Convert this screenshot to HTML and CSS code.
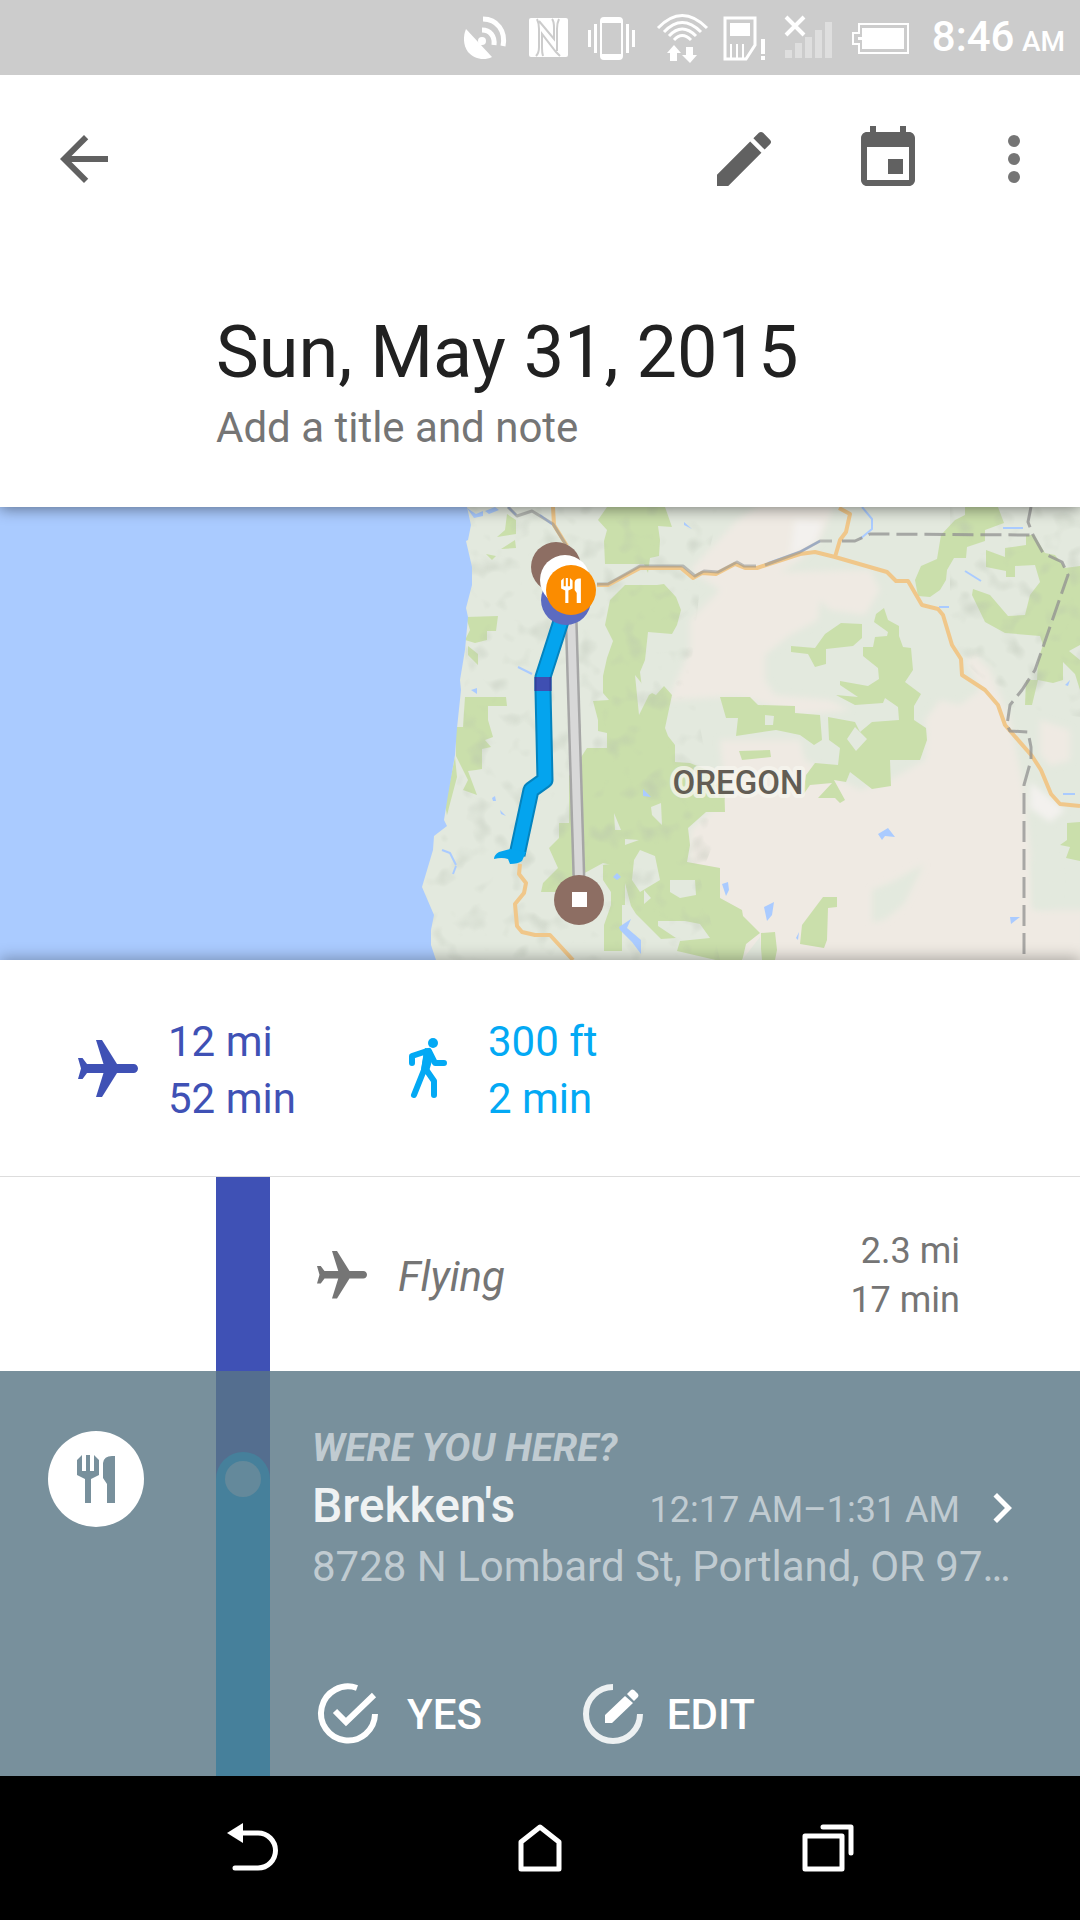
FILE: index.html
```html
<!DOCTYPE html>
<html lang="en">
<head>
    <meta charset="UTF-8">
    <meta name="viewport" content="width=device-width, initial-scale=1.0">
    <title>Timeline - Sun, May 31, 2015</title>
    <link rel="stylesheet" href="styles.css">
</head>
<body>

<!-- shared icons -->
<svg class="sprite" aria-hidden="true">
    <symbol id="plane" viewBox="0 0 24 24">
        <path transform="rotate(90 12 12)" d="M21 16v-2l-8-5V3.5c0-.83-.67-1.5-1.5-1.5S10 2.67 10 3.5V9l-8 5v2l8-2.5V19l-2 1.5V22l3.5-1 3.5 1v-1.5L13 19v-5.5l8 2.5z"/>
    </symbol>
    <symbol id="food" viewBox="0 0 38 48">
        <path d="M0 5L5 0v16h4V0h4v16h4V0l5 5v15l-8 4v24H8V24l-8-4z"/>
        <path d="M26 8q1-7 9-7h3v47h-8V29l-4-6z"/>
    </symbol>
</svg>

<div class="status-bar">
    <svg width="46" height="50" viewBox="464 12 46 50">
        <path d="M466 28l26 28c-8 4-18 2-24-5-5-7-5-16-2-23z"/>
        <circle cx="482" cy="40" r="4"/>
        <path d="M478 46l6-8" class="line"/>
        <path d="M482 29c8 0 13 6 12 15M483 18c14 0 23 12 20 27" class="line thick"/>
    </svg>
    <svg width="42" height="50" viewBox="528 12 42 50">
        <rect x="529" y="17" width="39" height="39" rx="2"/>
        <path d="M537 18q2 4 2 10v18q0 6-3 9M539 20l15 18V27q0-7-2-9M543 55q-1-3-1-8V33l14 18 4 4M559 18q-2 4-2 10v22" class="cut"/>
    </svg>
    <svg width="50" height="50" viewBox="588 12 50 50">
        <path fill-rule="evenodd" d="M604 16h15q4 0 4 4v35q0 4-4 4h-15q-4 0-4-4V20q0-4 4-4zM602 22v31h19V22z"/>
        <path d="M588 29h3v17h-3zM594 23h3v29h-3zM626 23h3v29h-3zM632 29h3v17h-3z"/>
    </svg>
    <svg width="50" height="50" viewBox="656 12 50 50">
        <path d="M658 27Q682 2 707 27M664 31Q682 12 701 31M669 35Q682 21 696 35M674 39Q682 30 691 39" class="line"/>
        <path d="M667 52l7-8 7 8h-4v8h-7v-8zM682 54l8 8 7-8h-4v-8h-7v8z"/>
    </svg>
    <svg width="42" height="50" viewBox="724 12 42 50">
        <path d="M725 17h30v27l-9 14h-21z" class="line"/>
        <path d="M730 22h20v13h-20zM730 43h2v14h-2zM736 43h2v14h-2zM742 43h2v14h-2zM761 38h4v15h-4zM761 55h4v4h-4z"/>
    </svg>
    <svg width="50" height="50" viewBox="784 12 50 50">
        <path d="M785 49h7v8h-7zM795 42h7v15h-7zM805 36h7v21h-7zM815 29h7v28h-7zM825 21h7v36h-7z" opacity=".35"/>
        <path d="M786 16l18 18M804 16l-18 18" class="line bold"/>
    </svg>
    <svg width="58" height="50" viewBox="852 12 58 50">
        <path d="M859 23h49v29h-49v-9h-6V32h6z" class="line thin"/>
        <path d="M862 27h42v21h-42v-9h-4v-3h4z"/>
    </svg>
    <div class="clock">8:46 <small>AM</small></div>
</div>

<header class="header">
    <div class="toolbar">
        <button class="icon-btn" aria-label="Back">
            <svg viewBox="0 0 24 24"><path d="M20 11H7.83l5.59-5.59L12 4l-8 8 8 8 1.41-1.41L7.83 13H20v-2z"/></svg>
        </button>
        <div class="actions">
            <button class="icon-btn" aria-label="Edit day">
                <svg viewBox="0 0 24 24"><path d="M3 17.25V21h3.75L17.81 9.94l-3.75-3.75L3 17.25zM20.71 7.04c.39-.39.39-1.02 0-1.41l-2.34-2.34c-.39-.39-1.02-.39-1.41 0l-1.83 1.83 3.75 3.75 1.83-1.83z"/></svg>
            </button>
            <button class="icon-btn" aria-label="Pick a date">
                <svg viewBox="0 0 24 24"><path d="M17 12h-5v5h5v-5zM16 1v2H8V1H6v2H5c-1.11 0-1.99.9-1.99 2L3 19c0 1.1.89 2 2 2h14c1.1 0 2-.9 2-2V5c0-1.1-.9-2-2-2h-1V1h-2zm3 18H5V8h14v11z"/></svg>
            </button>
            <button class="icon-btn more" aria-label="More options">
                <svg viewBox="0 0 24 24"><circle cx="12" cy="6" r="2"/><circle cx="12" cy="12" r="2"/><circle cx="12" cy="18" r="2"/></svg>
            </button>
        </div>
    </div>
    <div class="day">
        <h1>Sun, May 31, 2015</h1>
        <p>Add a title and note</p>
    </div>
</header>

<svg class="map" viewBox="0 507 1080 453" preserveAspectRatio="xMidYMid slice" role="img" aria-label="Map of Oregon">
    <defs>
        <filter id="soft"><feGaussianBlur stdDeviation="3"/></filter>
        <filter id="relief" x="0" y="0" width="100%" height="100%">
            <feTurbulence type="fractalNoise" baseFrequency=".045" numOctaves="2" seed="8"/>
            <feColorMatrix values="0 0 0 0 .45  0 0 0 0 .5  0 0 0 0 .42  1.2 0 0 0 -.66"/>
            <feComposite in2="SourceGraphic" operator="in"/>
        </filter>
    </defs>
    <rect class="land" x="400" y="507" width="680" height="453"/>

    <!-- dry plains -->
    <g class="desert" filter="url(#soft)">
        <path d="M738 520l22-16h75l-15 36-20 20-20 12 90-2 10 20-15 25-35-5-10-10-2 20-28 15-25 20v25l10 15 55 5 20 10-50 5-60-18h-20l-52 3 22-50v-30l30-30-30-20z"/>
        <path d="M720 740h80l5 20 55 30 30-10 35-20 2-27-2-13 15-20 20 5 20-15-15-30 10-5 15 15 20 50 5 25 9 45 6 60 5 60h50v60H745l-3-45-22-25-20-20-10-15v-35l15-13 20-22z"/>
        <path d="M1040 720l30 10v30l-20 6-10-12z"/>
        <path d="M795 520l28 2-8 22-25 12z" class="pale"/>
        <path d="M1030 782l35 28-15 12-20-14z" class="pale"/>
    </g>
    <g class="land" filter="url(#soft)">
        <path d="M872 890l20-8 32-18-20 40-20 16-12 2zM1032 860l20-5 6 20-2 30-24 4z"/>
    </g>

    <!-- forests -->
    <g class="forest">
        <path d="M466 617l32-1-2 15h-9v9l-12 3-10-3 5-10zM468 646l10 8v11l-10-10zM465 697h41l1 9h-19v14l5 17-8 3 6 7-9 2v20l-6 1-8 1 9 24-14-5 5-10-12-24v-29h7zM507 514l9 6v14l-19 3 8-7zM515 540l1 8-15 1zM486 554l10 2-4 4zM455 757l2 20-10 38-2-10z"/>
        <path d="M607 507h58l7 20-14-1 2 14-1 16-9 2-2 15-4-9-39 0-1-23 3-11-9-10z"/>
        <path d="M610 600l15-15h32l7-1 12 13 5 13-4 15-5 9-24-2-3 28-5 12 2 16 14 7 8-9 8 9-7 33 3 8 7 9v17l15 1 34 14 1 35h-19l-18 16 2 17-3 17 33 6v30l22 12 1 6 17 17-14 11-4 17h-22l-30-7-13-3 3-10 30-3-10-14-15-3h-27v5l18 12-15 1-25-25-5-8-6-23 0-15-22-5-22 12-18 17h-22l2-9 15-15-9-20 10-10v-15h10v-47l18-28h20v-15l-9-2v-11l-5-19 16-1-6-7v-17l4-18 6-17-8-16z"/>
        <path d="M603 865l22-3v43l-3 0v46h-18v-26l7-20v-13l-8-12z"/>
        <path d="M965 507h33l6 16-19 7v11l-18 6-1 11h-12l-7 12-1 10-6 10-10 7-12-1-3-16 6-14 16-7 4-24 14-15 10-5z"/>
        <path d="M986 550l19 7v-9l21-3v-10h8l11 18 10 2 10 13 15-2v79l-11 6 11 9v30l-5-16-12-12v18l-10 3-15-3-6 25h-7l1-25h11l1-20 5-15-3-9-35-3-20-11-13-27 1-6 17 6 18 21 17-1 5-20 10-13-5-17-20 1v11h-9v-6l-20-4z"/>
        <path d="M791 646l24 2 10-14 16-11 21 1v14l-9 8-27 3v15l-11 3-7-13-17-2z"/>
        <path d="M884 608l4 12 11 6v10l4 11 8 1 2 22-8 12 16 12-7 12v14l12 8 1 12-7 20h-30l1 26-19 3-22-17-4 10-12-2 11 20-5 3-5-5h-17l14-15-22 2-7 10 3-20 9-12 23 2 2-17-11-8-1-23 27 5 5 10 12-10 27-2-1-13-13-9-2 5-28 2-19-10 22 2-18-12v-4l28 5 11-7-1-11-15-12v-9h10l2-10 12-1 1-4-14-10 2-8z"/>
        <path d="M720 697h30l8 8 37 1v7l25 2 2 25-8 5-14-10-24-5-40 6 2-18h-12zM739 751l31-1 1 7-29 3zM823 897h14v10l-9 1-1 32-3 8-24-4 2-19zM1067 823l13-1v39l-14-3 4-11-10-2 7-5zM761 933l14-1 2 18-2 10h-14zM700 797h25l-5 14z"/>
    </g>
    <g class="land">
        <path d="M765 715l9 1-1 9h-8zM634 860l6-10 15 6 5 24-20 12-8-12zM670 880h25l1 15-16 3-10-6zM644 890l7 8-7 6zM651 807l10-4 1 22-10-10zM614 813l7 17-6 0zM625 839l14 1-14 5zM760 937l-18 23h20zM855 727l12 12-11 12-9-12z"/>
        <path d="M639 715l-4-40 12 15 10 0-8 5z"/>
    </g>
    <path class="relief" filter="url(#relief)" d="M470 507h250l-20 80-10 90 30 150-20 50 20 83H436l-14-73 40-120z"/>
    <path class="relief" filter="url(#relief)" d="M950 507h130v210l-70-10-60-60z"/>

    <!-- water -->
    <path class="water" d="M0 507h467l4 18-3 15-2 1 6 26v18l-6 23 2 9-3 33-5 30 1 10-4 38-2 27-7 40-4 25 3 6-13 10-1 14-11 37 12 28-3 15v15l5 15H0z"/>
    <path class="water" d="M467 508l9 6 7-3 0 5-9 2zM485 511l10-4 4 3-10 4zM619 927l12-8-4 9 14 12v14l-9-12-12-12zM722 884l6-2 1 8-3 6zM764 907l10-5-2 13-5 6zM878 834l10-6 7 9-10-1-3 4zM1010 917l10 0-9 7zM796 938l3-6-1 8zM643 789l8 8-8-1zM613 877l4-4 4 4-4 3zM492 798l3-2 1 5h-3zM500 810l6 6-5-2zM471 690l6-2v6zM684 522l8 7-8-4zM1065 685l5-5-2 6z"/>
    <path class="river" d="M768 563l32-11 20-11M862 507l10 12 0 10-12 10M965 571l16 10M1003 528h20M939 607h10M508 507l8 8M540 515l13 10M518 667l14 7M1063 794h12M442 850l8 3 6 12M456 866l-3 8"/>

    <!-- roads -->
    <path class="road" d="M553 507l1 18 13 21M597 585h11l32-17 41 0 12 10 9-5 14 1 19-10 10 4h12l43-14 15-2 20 5 52 15 9 9h12l14 24 16 4 5 6 9 30 9 14 1 16 23 15 13 15 7 20 27 31 9 14 10 24 9 10 20 2M835 557l5-17 6-8 4-18-11-6M520 864l-1 10 7 9-2 10-9 11 2 22 5 6 13 3h15l23 25"/>
    <path class="border" d="M508 507l9 9 15-5 21 13 13 21M597 584h11l32-18 43 0 12 10 9-5 14 1 19-10 7 4h12M765 565l35-13 20-11h12"/>
    <path class="border dashed" d="M842 541h13l15-7 161 1M1031 507l-3 15 5 13 10 18 19 9 6 13-33 95-13 20-12 15-3 20 3 6 18 1 3 15v13l-7 25v175"/>

    <text class="place" x="738" y="794" text-anchor="middle">OREGON</text>

    <!-- trips -->
    <path class="trip gray-edge" d="M571 615l8 265"/>
    <path class="trip gray" d="M571 615l8 265"/>
    <path class="trip blue-edge" d="M563 615l-20 62v14l2 89-14 10-14 65"/>
    <path class="trip blue" d="M563 615l-20 62v14l2 89-14 10-14 65"/>
    <path class="blue-tip" d="M510 849l-11 3q-5 3-5 7 8-2 14 0l2 5q8 0 12-3l4-9z"/>
    <path class="trip indigo-edge" d="M543 677v14"/>
    <path class="trip indigo" d="M543 677v14"/>

    <!-- stops -->
    <circle cx="556" cy="567" r="25" class="brown"/>
    <circle cx="566" cy="600" r="25" class="indigo-stop"/>
    <circle cx="565" cy="580" r="25" class="white"/>
    <circle cx="571" cy="590" r="25" class="orange"/>
    <use href="#food" x="560" y="578" width="22" height="25" class="white"/>
    <circle cx="579" cy="900" r="25" class="brown"/>
    <path d="M572 892h15v15h-15z" class="white"/>
</svg>

<section class="stats">
    <div class="stat flying">
        <svg><use href="#plane"/></svg>
        <p>12 mi<br>52 min</p>
    </div>
    <div class="stat walking">
        <svg viewBox="392 1034 72 72">
            <circle cx="433" cy="1043" r="5"/>
            <path d="M412 1063v-7l15-5-3 19-10 25M425 1068l9 13v14M429 1051l6 12h9" fill="none" stroke="currentColor" stroke-width="6" stroke-linecap="round" stroke-linejoin="round"/>
            <path d="M425 1048l6 2 2 8-4 13-8-1z"/>
        </svg>
        <p>300 ft<br>2 min</p>
    </div>
</section>

<main class="timeline">
    <div class="segment">
        <div class="bar"></div>
        <div class="segment-info">
            <svg><use href="#plane"/></svg>
            <em>Flying</em>
            <p>2.3 mi<br>17 min</p>
        </div>
    </div>

    <div class="visit">
        <div class="visit-icon"><svg><use href="#food"/></svg></div>
        <div class="visit-bar"><div class="visit-line"><span class="dot"></span></div></div>
        <div class="visit-info">
            <p class="question">WERE YOU HERE?</p>
            <a class="place-link" href="#">
                <span class="name">Brekken's</span>
                <span class="time">12:17 AM–1:31 AM</span>
                <svg viewBox="0 0 24 24"><path d="M10 6L8.59 7.41 13.17 12l-4.58 4.59L10 18l6-6z"/></svg>
            </a>
            <p class="address">8728 N Lombard St, Portland, OR 97…</p>
            <div class="visit-actions">
                <button>
                    <svg viewBox="312 1678 72 72">
                        <path d="M357 1688a27 27 0 1 0 18 26M335 1711l11 11 28-27"/>
                    </svg>
                    YES
                </button>
                <button>
                    <svg viewBox="571 1678 72 72">
                        <path d="M612 1687a27 27 0 1 0 27 27" opacity=".87"/>
                        <path class="solid" d="M604 1715l20-19 8 7-21 20h-7zM626 1694l4-4q1-1 3 0l4 4q1 2 0 3l-4 4z"/>
                    </svg>
                    EDIT
                </button>
            </div>
        </div>
    </div>
</main>

<nav class="nav-bar">
    <button aria-label="Back">
        <svg viewBox="216 1812 72 72"><path d="M241 1833h17a17 17 0 0 1 0 35h-23"/><path class="solid" d="M227 1833l16-10v20z"/></svg>
    </button>
    <button aria-label="Home">
        <svg viewBox="504 1812 72 72"><path d="M521 1869v-27l19-15 19 15v27z"/></svg>
    </button>
    <button aria-label="Recent apps">
        <svg viewBox="792 1812 72 72"><path d="M805 1836h37v33h-37zM823 1827h28v26"/></svg>
    </button>
</nav>

</body>
</html>
```

FILE: styles.css
```css
* {
    box-sizing: border-box;
}

body {
    margin: 0;
    min-height: 100vh;
    display: flex;
    flex-direction: column;
    background-color: #fff;
    font-family: Roboto, sans-serif;
    font-size: 42px;
    color: #757575;
}

h1, p {
    margin: 0;
    font-weight: 400;
}

button {
    border: none;
    padding: 0;
    background: none;
    font: inherit;
    color: inherit;
    cursor: pointer;
}

svg {
    display: block;
    flex-shrink: 0;
    fill: currentColor;
}

.sprite {
    position: absolute;
    width: 0;
    height: 0;
}

/* status bar */
.status-bar {
    position: relative;
    z-index: 1;
    display: flex;
    justify-content: flex-end;
    align-items: center;
    gap: 18px;
    height: 75px;
    padding-right: 15px;
    background-color: #ccc;
    color: #fff;
}

.status-bar svg {
    overflow: visible;
}

.status-bar .line {
    fill: none;
    stroke: #fff;
    stroke-width: 3;
}

.status-bar .bold {
    stroke-width: 4;
}

.status-bar .thick {
    stroke-width: 5;
}

.status-bar .thin {
    stroke-width: 2;
}

.status-bar .cut {
    fill: none;
    stroke: #ccc;
    stroke-width: 2;
}

.clock {
    margin-left: 4px;
    padding-top: 4px;
    font-weight: 500;
    line-height: 50px;
}

.clock small {
    margin-left: -3px;
    font-size: 28px;
}

/* header */
.header {
    position: relative;
    background-color: #fff;
    box-shadow: 0 2px 14px rgba(0, 0, 0, 0.45);
}

.toolbar {
    display: flex;
    justify-content: space-between;
    align-items: center;
    height: 168px;
    padding: 0 30px 0 48px;
    color: #616161;
}

.actions {
    display: flex;
    gap: 72px;
}

.icon-btn, .icon-btn svg {
    width: 72px;
    height: 72px;
}

.more {
    margin-left: -18px;
    color: #757575;
}

.day {
    padding: 68px 48px 52px 216px;
}

.day h1 {
    font-size: 72px;
    line-height: 84px;
    color: #212121;
}

.day p {
    margin-top: 6px;
    line-height: 54px;
}

/* map */
.map {
    width: 100%;
    height: 453px;
    background-color: #aacbff;
}

.land { fill: #e3e9de; }
.desert { fill: #efeae3; }
.pale { fill: #f3f1ee; }
.forest { fill: #cadfab; }
.water { fill: #aacbff; }
.brown { fill: #8d6e63; }
.white { fill: #fff; }
.orange { fill: #fb8c00; }
.indigo-stop { fill: #5c6bc0; }

.river, .road, .border, .trip {
    fill: none;
    stroke-linejoin: round;
}

.river {
    stroke: #aacbff;
    stroke-width: 2;
}

.road {
    stroke: #f0c78a;
    stroke-width: 4;
}

.border {
    stroke: #909090;
    stroke-width: 3;
    stroke-opacity: 0.55;
}

.dashed {
    stroke-dasharray: 21 7;
    stroke-opacity: 0.75;
}

.place {
    font-size: 33px;
    font-weight: 500;
    fill: #625d54;
    stroke: #f6f5ee;
    stroke-opacity: 0.8;
    stroke-width: 8;
    stroke-linejoin: round;
    paint-order: stroke;
}

.gray-edge { stroke: #a6a6a6; stroke-width: 13; }
.gray { stroke: #d8d8d8; stroke-width: 8; }
.blue-edge { stroke: #0483be; stroke-width: 17; }
.blue { stroke: #04a4ee; stroke-width: 13; }
.blue-tip { fill: #04a4ee; }
.indigo-edge { stroke: #33419b; stroke-width: 17; }
.indigo { stroke: #3f4fb2; stroke-width: 13; }

/* distance summary */
.stats {
    position: relative;
    display: grid;
    grid-template-columns: 320px 1fr;
    padding: 53px 72px 49px;
    border-bottom: 1px solid #ddd;
    background-color: #fff;
    box-shadow: 0 -2px 14px rgba(0, 0, 0, 0.3);
}

.stat {
    display: flex;
    align-items: center;
    gap: 24px;
    line-height: 57px;
}

.stat svg {
    width: 72px;
    height: 72px;
}

.flying { color: #3f51b5; }
.walking { color: #03a9f4; }

/* timeline */
.timeline {
    position: relative;
    background-color: #fff;
}

.segment, .visit {
    display: grid;
    grid-template-columns: 216px 54px 1fr;
}

.bar {
    grid-column: 2;
    background-color: #3f51b5;
}

.segment-info {
    display: flex;
    align-items: center;
    padding: 50px 120px 46px 42px;
}

.segment-info svg {
    width: 60px;
    height: 60px;
    margin-right: 26px;
}

.segment-info p {
    margin-left: auto;
    font-size: 36px;
    line-height: 49px;
    text-align: right;
}

.visit {
    background-color: #78909c;
    color: #fff;
}

.visit-icon {
    display: flex;
    align-items: center;
    justify-content: center;
    width: 96px;
    height: 96px;
    margin: 60px 0 0 48px;
    border-radius: 50%;
    background-color: #fff;
    color: #78909c;
}

.visit-icon svg {
    width: 38px;
    height: 48px;
}

.visit-bar {
    display: flex;
    padding-top: 81px;
    background-color: #546e8f;
}

.visit-line {
    width: 54px;
    padding: 9px;
    border-radius: 27px 27px 0 0;
    background-color: #46809b;
}

.dot {
    display: block;
    width: 36px;
    height: 36px;
    border-radius: 50%;
    background-color: #64899b;
}

.visit-info {
    padding: 52px 48px 26px 42px;
    min-width: 0;
}

.question {
    font-size: 39px;
    font-weight: 700;
    font-style: italic;
    line-height: 50px;
    color: #c0cbd1;
}

.place-link {
    display: flex;
    align-items: baseline;
    margin-top: 1px;
    line-height: 64px;
    color: #eff2f3;
    text-decoration: none;
}

.name {
    font-size: 48px;
    font-weight: 500;
}

.time {
    margin-left: auto;
    font-size: 36px;
    color: #c0cbd1;
}

.place-link svg {
    align-self: center;
    width: 60px;
    height: 60px;
    margin-left: 12px;
    fill: #fff;
}

.address {
    line-height: 50px;
    color: #c0cbd1;
    white-space: nowrap;
    overflow: hidden;
    text-overflow: ellipsis;
}

.visit-actions {
    display: flex;
    gap: 90px;
    margin-top: 86px;
}

.visit-actions button {
    display: flex;
    align-items: center;
    gap: 23px;
    font-weight: 500;
}

.visit-actions svg {
    width: 72px;
    height: 72px;
}

.visit-actions path, .nav-bar path {
    fill: none;
    stroke: #fff;
    stroke-width: 6;
}

.nav-bar path {
    stroke-width: 5;
    stroke-linecap: round;
    stroke-linejoin: round;
}

.visit-actions .solid, .nav-bar .solid {
    fill: #fff;
    stroke: none;
}

/* navigation */
.nav-bar {
    display: flex;
    justify-content: space-around;
    align-items: center;
    height: 144px;
    margin-top: auto;
    padding: 0 10%;
    background-color: #000;
}

.nav-bar svg {
    width: 72px;
    height: 72px;
}
```
